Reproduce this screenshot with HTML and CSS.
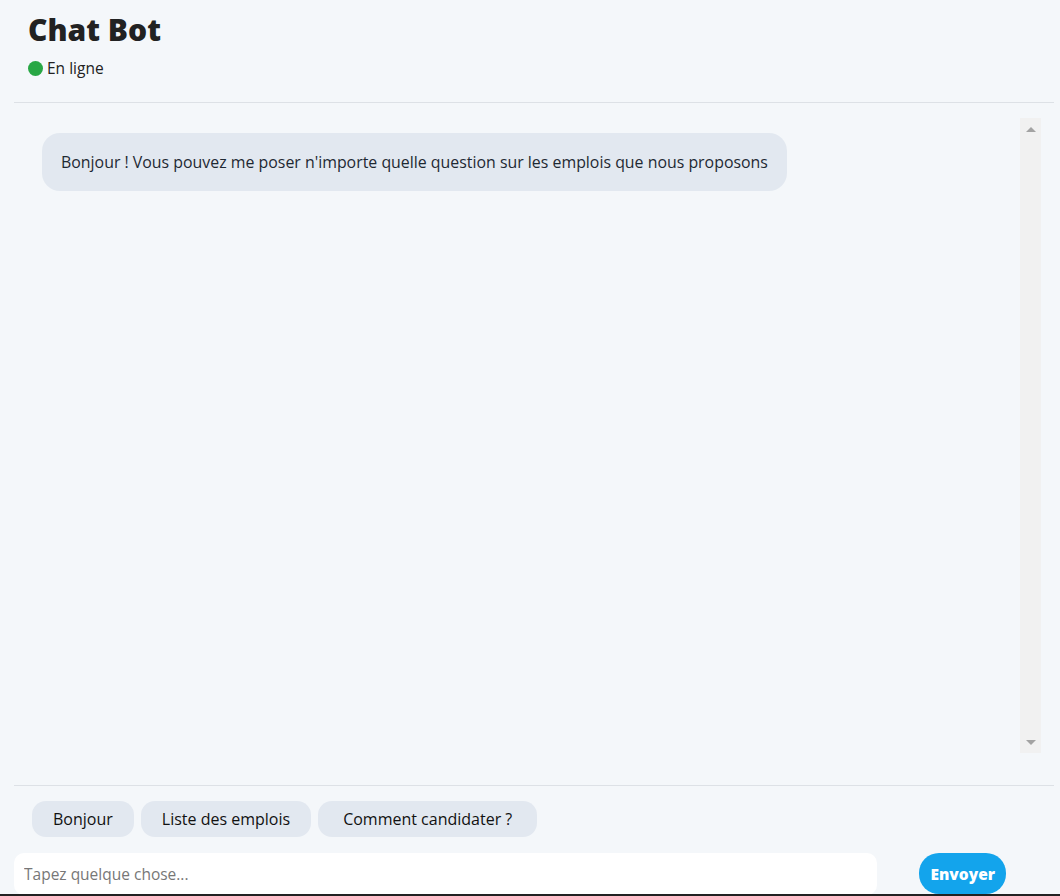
FILE: index.html
```html
<!DOCTYPE html>
<html lang="fr">
<head>
  <meta charset="UTF-8" />
  <title>Chat Bot</title>
  <meta name="viewport" content="width=device-width, initial-scale=1.0" />
  <link rel="stylesheet" href="styles.css">
</head>
<body>

  <div class="chat">
    <header class="chat-header">
      <h1>Chat Bot</h1>
      <p class="status"><span class="dot"></span>En ligne</p>
    </header>

    <div class="messages">
      <div class="message-list" id="messages">
        <div class="bubble bot">Bonjour ! Vous pouvez me poser n'importe quelle question sur les emplois que nous proposons</div>
      </div>
      <div class="scrollbar">
        <span class="arrow up"></span>
        <span class="arrow down"></span>
      </div>
    </div>

    <div class="quick-replies">
      <button class="chip">Bonjour</button>
      <button class="chip">Liste des emplois</button>
      <button class="chip">Comment candidater ?</button>
    </div>

    <form class="composer" onsubmit="return false;">
      <input type="text" placeholder="Tapez quelque chose..." />
      <button type="submit" class="send">Envoyer</button>
    </form>
  </div>

</body>
</html>
```

FILE: styles.css
```css
* {
  box-sizing: border-box;
}

body {
  margin: 0;
  background: #f4f7fa;
  font-family: "Open Sans", Arial, sans-serif;
  color: #1e2933;
}

.chat {
  height: 896px;
  padding: 0 6px 0 14px;
  display: flex;
  flex-direction: column;
  border-bottom: 2px solid #222;
  overflow: hidden;
}

.chat > * {
  flex-shrink: 0;
}

.chat-header {
  padding: 11px 14px 23px;
  border-bottom: 1px solid #dde1e6;
}

.chat-header h1 {
  margin: 0;
  font-size: 30px;
  font-weight: 800;
  color: #222;
  line-height: 38px;
}

.status {
  margin: 8px 0 0;
  display: flex;
  align-items: center;
  gap: 4px;
  font-size: 15.5px;
  color: #222;
}

.dot {
  width: 15px;
  height: 15px;
  border-radius: 50%;
  background: #28a745;
}

.messages {
  height: 635px;
  margin: 15px 13px 32px 0;
  display: flex;
}

.message-list {
  flex: 1;
  padding: 15px 28px;
}

.scrollbar {
  width: 21px;
  background: #f1f1f1;
  display: flex;
  flex-direction: column;
  justify-content: space-between;
  align-items: center;
  padding: 9px 0 8px;
}

.arrow {
  width: 0;
  height: 0;
  border-left: 5px solid transparent;
  border-right: 5px solid transparent;
}

.arrow.up {
  border-bottom: 5px solid #a3a3a3;
}

.arrow.down {
  border-top: 5px solid #a3a3a3;
}

.bubble {
  display: inline-block;
  background: #e2e8f0;
  border-radius: 18px;
  padding: 18px 19px;
  font-size: 15.9px;
  line-height: 22px;
}

.quick-replies {
  border-top: 1px solid #dde1e6;
  padding: 15px 18px 15px;
  display: flex;
  gap: 7px;
}

.chip {
  font-family: inherit;
  font-size: 16px;
  color: #111;
  background: #e2e8f0;
  border: none;
  border-radius: 14px;
  height: 36px;
  padding: 0 21px;
}

.chip:last-child {
  padding: 0 25px;
}

.composer {
  display: flex;
  align-items: flex-start;
  gap: 42px;
  padding-top: 1px;
  padding-right: 48px;
}

.composer input {
  flex: 1;
  height: 42px;
  border: none;
  border-radius: 10px;
  background: #fff;
  padding: 0 10px;
  font-family: inherit;
  font-size: 15.5px;
}

.composer input::placeholder {
  color: #777;
}

.send {
  background: #13a4ec;
  color: #fff;
  border: none;
  border-radius: 20px;
  height: 41px;
  padding: 0 11px;
  font-family: inherit;
  font-weight: 800;
  font-size: 15.5px;
}
```
